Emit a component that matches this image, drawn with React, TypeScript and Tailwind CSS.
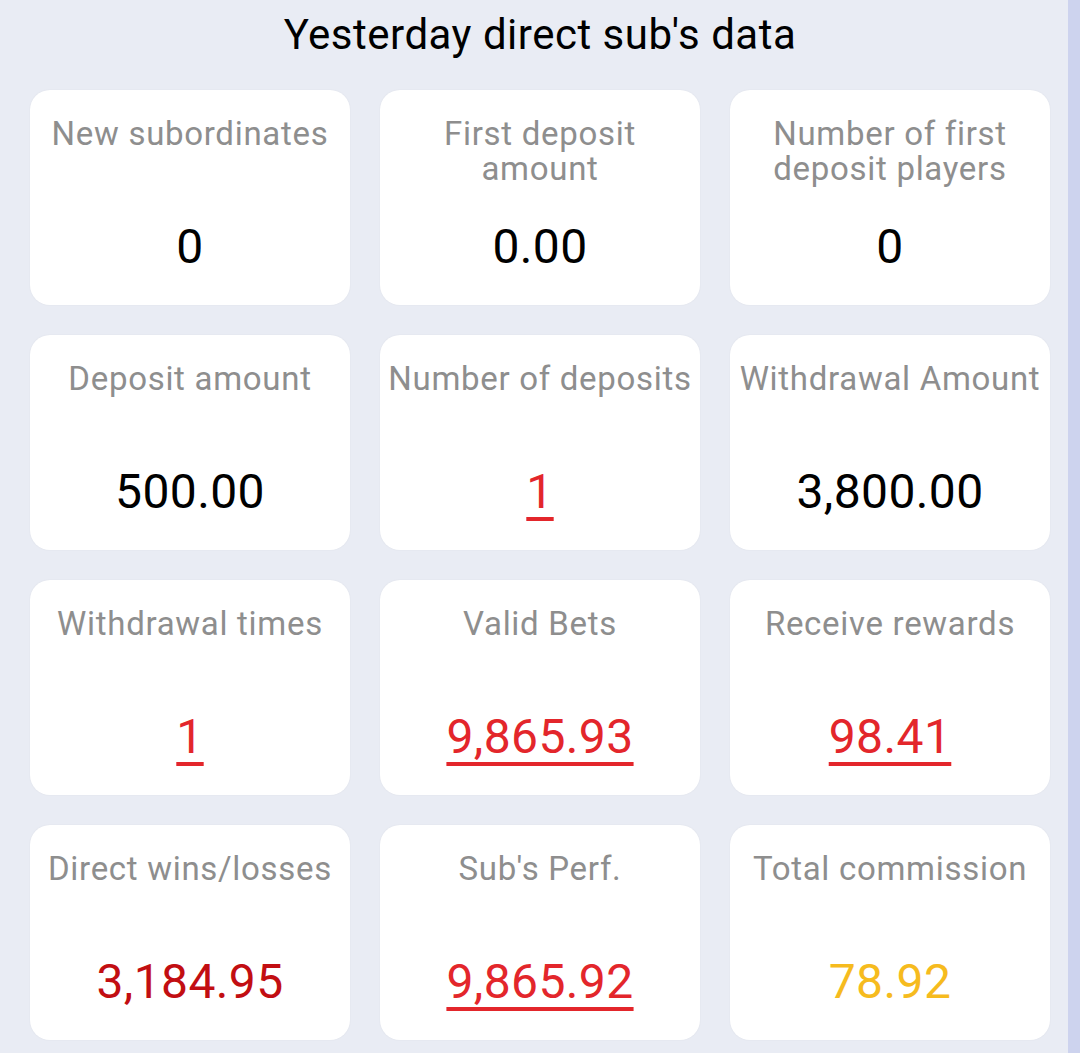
import React from 'react';

type Tone = 'plain' | 'link' | 'loss' | 'gold';

interface Stat {
  label: string;
  value: string;
  tone: Tone;
}

const stats: Stat[] = [
  { label: 'New subordinates', value: '0', tone: 'plain' },
  { label: 'First deposit amount', value: '0.00', tone: 'plain' },
  { label: 'Number of first deposit players', value: '0', tone: 'plain' },
  { label: 'Deposit amount', value: '500.00', tone: 'plain' },
  { label: 'Number of deposits', value: '1', tone: 'link' },
  { label: 'Withdrawal Amount', value: '3,800.00', tone: 'plain' },
  { label: 'Withdrawal times', value: '1', tone: 'link' },
  { label: 'Valid Bets', value: '9,865.93', tone: 'link' },
  { label: 'Receive rewards', value: '98.41', tone: 'link' },
  { label: 'Direct wins/losses', value: '3,184.95', tone: 'loss' },
  { label: "Sub's Perf.", value: '9,865.92', tone: 'link' },
  { label: 'Total commission', value: '78.92', tone: 'gold' },
];

const toneClass: Record<Tone, string> = {
  plain: 'text-black',
  link: 'text-[#e3262b] underline decoration-[4px] underline-offset-[9px]',
  loss: 'text-[#c20e12]',
  gold: 'text-[#f6bb1e]',
};

const StatCard: React.FC<{ stat: Stat }> = ({ stat }) => (
  <div className="h-[215px] rounded-[20px] bg-white shadow-[0_0_2px_rgba(0,0,0,0.06)] pt-[26px] px-1 flex flex-col items-center text-center">
    <div className="h-[107px] w-full text-[33px] leading-[35px] tracking-[0.7px] text-[#8e8e8e]">{stat.label}</div>
    <div className={`text-[48px] leading-[48px] tracking-[0.4px] ${toneClass[stat.tone]}`}>{stat.value}</div>
  </div>
);

export default function App() {
  return (
    <div
      className="flex h-[1053px] w-[1080px] overflow-hidden bg-[#e9ecf4]"
      style={{ fontFamily: 'Roboto, "Noto Sans", sans-serif' }}
    >
      <div className="w-[1068px] pl-[30px] pr-[18px]">
        <h2 className="h-[75px] pt-[10px] text-center text-[42px] leading-[50px] tracking-[0.5px] text-black">
          Yesterday direct sub's data
        </h2>
        <div className="mt-[15px] grid grid-cols-3 gap-[30px]">
          {stats.map((s) => (
            <StatCard key={s.label} stat={s} />
          ))}
        </div>
      </div>
      <div className="w-[12px] bg-[#cdd3ee]" />
    </div>
  );
}
